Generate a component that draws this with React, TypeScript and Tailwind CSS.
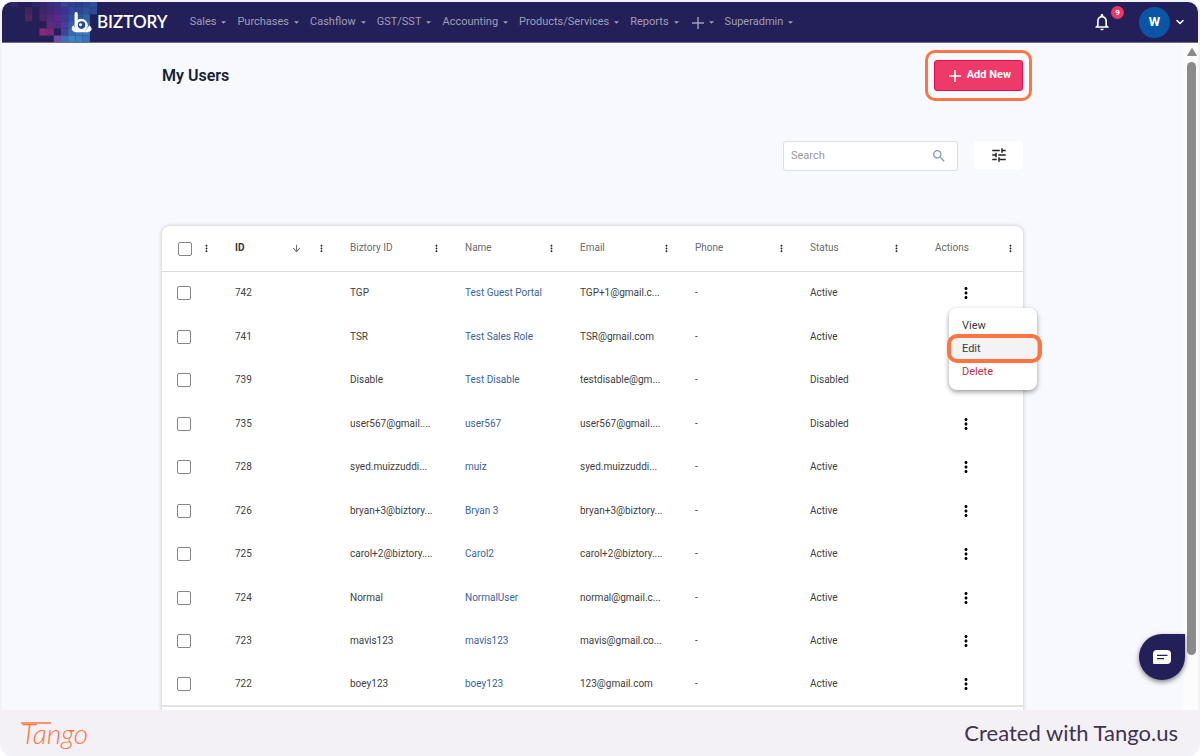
import { ChevronDown } from "lucide-react";
import { MdArrowDownward, MdMoreVert, MdOutlineNotifications, MdSearch, MdTune } from "react-icons/md";

const navItems = ["Sales", "Purchases", "Cashflow", "GST/SST", "Accounting", "Products/Services", "Reports", "+", "Superadmin"];

const columns = ["Biztory ID", "Name", "Email", "Phone", "Status"];

const users = [
  { id: "742", biztoryId: "TGP", name: "Test Guest Portal", email: "TGP+1@gmail.c...", status: "Active" },
  { id: "741", biztoryId: "TSR", name: "Test Sales Role", email: "TSR@gmail.com", status: "Active" },
  { id: "739", biztoryId: "Disable", name: "Test Disable", email: "testdisable@gm...", status: "Disabled" },
  { id: "735", biztoryId: "user567@gmail....", name: "user567", email: "user567@gmail....", status: "Disabled" },
  { id: "728", biztoryId: "syed.muizzuddi...", name: "muiz", email: "syed.muizzuddi...", status: "Active" },
  { id: "726", biztoryId: "bryan+3@biztory...", name: "Bryan 3", email: "bryan+3@biztory...", status: "Active" },
  { id: "725", biztoryId: "carol+2@biztory....", name: "Carol2", email: "carol+2@biztory....", status: "Active" },
  { id: "724", biztoryId: "Normal", name: "NormalUser", email: "normal@gmail.c...", status: "Active" },
  { id: "723", biztoryId: "mavis123", name: "mavis123", email: "mavis@gmail.co...", status: "Active" },
  { id: "722", biztoryId: "boey123", name: "boey123", email: "123@gmail.com", status: "Active" },
];

// Mosaic tiles behind the logo: column, row, colour
const tiles: [number, number, string][] = [
  [1, 0, "#2f2662"], [4, 0, "#30256a"], [5, 0, "#33286f"], [6, 0, "#3a2c7c"], [7, 0, "#34317f"], [8, 0, "#3a3f97"], [9, 0, "#323f90"], [10, 0, "#2d3c8a"], [11, 0, "#2c468f"], [12, 0, "#2f4f9c"],
  [3, 1, "#43235f"], [5, 1, "#43266a"], [6, 1, "#3d2a73"], [7, 1, "#492b86"], [8, 1, "#3a3590"], [9, 1, "#33469c"], [10, 1, "#2d4795"], [11, 1, "#2c529c"], [12, 1, "#2c4a92"],
  [3, 2, "#52255f"], [5, 2, "#4b2665"], [6, 2, "#542a78"], [7, 2, "#56298a"], [8, 2, "#3b3b95"], [9, 2, "#33509f"], [10, 2, "#2e559e"], [11, 2, "#2f64a9"],
  [6, 3, "#5e2a7a"], [7, 3, "#4f2c87"], [8, 3, "#4b3b9a"], [9, 3, "#3a5bad"], [10, 3, "#3165ad"], [11, 3, "#3672b4"],
  [5, 4, "#8b2878"], [6, 4, "#7a297b"], [8, 4, "#473f9d"], [9, 4, "#3c67b5"], [10, 4, "#3878bd"], [11, 4, "#3a7cc0"],
  [7, 5, "#6c4fa6"], [8, 5, "#3d6fb9"], [9, 5, "#3d83c4"], [10, 5, "#3b7dc0"], [11, 5, "#3672b5"],
];

function Mosaic() {
  return (
    <svg className="absolute inset-y-0 left-0 h-full w-24" viewBox="0 0 96 40" preserveAspectRatio="xMinYMin slice" aria-hidden="true">
      {tiles.map(([c, r, color]) => (
        <rect key={`${c}-${r}`} x={c * 7.2 + 1.4} y={r * 7.1 - 2} width="7.3" height="7.2" fill={color} />
      ))}
    </svg>
  );
}

function LogoMark() {
  return (
    <svg className="h-[21px] w-[21px]" viewBox="0 0 20 20" fill="none" aria-hidden="true">
      <path d="M4.9 1.6v10" stroke="#fff" strokeWidth="3" strokeLinecap="round" />
      <circle cx="9.7" cy="12.7" r="6.3" fill="#fff" />
      <path d="M2.4 12.6c-2 1.6-2.4 4-.6 5.5 1 .9 3 .9 4.2.6M17.3 12.8c2.6 1.5 3 4 1.6 5.4-1.2.9-3.600.8-5 .1" fill="#fff" />
      <path d="M3.6 18.3h13" stroke="#fff" strokeWidth="1.8" />
      <circle cx="10" cy="12.5" r="3.6" fill="#2b4a94" />
      <circle cx="9" cy="12.2" r="1.4" fill="#fff" />
    </svg>
  );
}

function Caret() {
  return (
    <svg className="w-[5px]" viewBox="0 0 5 3" aria-hidden="true">
      <path d="M0 .2h5L2.5 2.8z" fill="currentColor" />
    </svg>
  );
}

function NavBar() {
  return (
    <header className="relative flex h-[41px] shrink-0 items-center overflow-hidden rounded-t-[10px] border-b border-[#6e6b8c] bg-[#231f58] pr-3 pl-[69px]">
      <Mosaic />
      <a href="#home" className="relative flex items-center gap-[5px] font-[Lato,sans-serif] text-[17px] leading-5 font-semibold text-white">
        <LogoMark />
        BIZTORY
      </a>
      <nav className="ml-[22px] flex items-center gap-[11px] text-[11px] leading-4 text-[#a09eb9]">
        {navItems.map((item) => (
          <a key={item} href="#menu" className="flex items-center gap-[5px]">
            {item === "+" ? (
              <svg className="mt-[2px] ml-[2px] size-3" viewBox="0 0 12 12" stroke="currentColor" strokeWidth="1.4" role="img" aria-label="Create">
                <path d="M6 0v12M0 6h12" />
              </svg>
            ) : (
              item
            )}
            <Caret />
          </a>
        ))}
      </nav>
      <div className="ml-auto flex items-center">
        <button type="button" aria-label="Notifications" className="relative text-white">
          <MdOutlineNotifications className="size-5" />
          <span className="absolute -top-[6px] left-[19px] flex size-[13px] items-center justify-center rounded-full bg-[#ec3763] text-[8px] leading-3 font-bold text-white">9</span>
        </button>
        <button type="button" aria-label="Account" className="ml-[27px] flex items-center gap-1 text-white">
          <span className="flex size-[31px] items-center justify-center rounded-full bg-[#0a55a5] text-[13px] font-bold">W</span>
          <ChevronDown className="size-3" strokeWidth={3} />
        </button>
      </div>
    </header>
  );
}

function ColumnMenu() {
  return (
    <button type="button" aria-label="Column menu" className="flex w-[10px] justify-center text-[#222]">
      <MdMoreVert className="size-[11px] shrink-0" />
    </button>
  );
}

function Check({ label }: { label: string }) {
  return <input type="checkbox" aria-label={label} className="block size-[14px] appearance-none rounded-[2px] border border-[#858585] bg-white" />;
}

function ActionMenu() {
  return (
    <div className="absolute top-9 left-9 z-10 flex w-[88px] flex-col rounded-lg bg-white pt-[6px] pb-[7px] text-[11px] leading-[23px] text-[#3a3a3a] shadow-[0_2px_5px_rgba(0,0,0,0.4)]">
      <button type="button" className="px-[13px] text-left">View</button>
      <button type="button" className="relative bg-[#f3f3f3] px-[13px] text-left">
        Edit
        <span className="absolute -inset-y-[3px] -right-[5px] -left-[2px] rounded-[10px] border-4 border-[#ff7442]" />
      </button>
      <button type="button" className="px-[13px] text-left text-[#c62f3a]">Delete</button>
    </div>
  );
}

function UserTable() {
  return (
    <div className="mt-[55px] rounded-t-lg bg-white pb-12 shadow-[0_0_4px_rgba(0,0,0,0.22)]">
      <table className="w-full table-fixed border-collapse text-left text-[10px] leading-4 text-[#404040]">
        <colgroup>
          <col className="w-[61px]" />
          <col /><col /><col /><col /><col /><col />
          <col className="w-[110px]" />
        </colgroup>
        <thead>
          <tr className="h-[45px] border-b border-[#dcdcdc] text-[#6b6b6b]">
            <th className="p-0 pt-px pl-4">
              <div className="flex items-center gap-[9px]">
                <Check label="Select all users" />
                <ColumnMenu />
              </div>
            </th>
            <th className="p-0 pl-3 font-bold text-[#333]">
              <div className="flex items-center pr-[12px]">
                ID
                <MdArrowDownward className="mr-[14px] ml-auto size-[11px] text-[#666]" />
                <ColumnMenu />
              </div>
            </th>
            {columns.map((column) => (
              <th key={column} className="p-0 pl-3 font-normal">
                <div className="flex items-center justify-between pr-[12px]">
                  {column}
                  <ColumnMenu />
                </div>
              </th>
            ))}
            <th className="p-0 pl-[22px] font-normal">
              <div className="flex items-center justify-between pr-2">
                Actions
                <ColumnMenu />
              </div>
            </th>
          </tr>
        </thead>
        <tbody className="border-b-2 border-[#e2e2e2]">
          {users.map((user, index) => (
            <tr key={user.id} className="odd:h-11 even:h-[43px]">
              <td className="p-0 pl-[15px]"><Check label={`Select user ${user.id}`} /></td>
              <td className="p-0 pl-3">{user.id}</td>
              <td className="p-0 pl-3">{user.biztoryId}</td>
              <td className="p-0 pl-3"><a href="#user" className="text-[#38639f]">{user.name}</a></td>
              <td className="p-0 pl-3">{user.email}</td>
              <td className="p-0 pl-3">-</td>
              <td className="p-0 pl-3">{user.status}</td>
              <td className="relative p-0 pl-11">
                <button type="button" aria-label={`Actions for user ${user.id}`} className="flex w-[18px] justify-center text-black">
                  <MdMoreVert className="size-[18px] shrink-0" />
                </button>
                {index === 0 && <ActionMenu />}
              </td>
            </tr>
          ))}
        </tbody>
      </table>
    </div>
  );
}

export default function App() {
  return (
    <div className="h-screen bg-white font-[Roboto,sans-serif]">
      <div className="flex h-full flex-col rounded-xl bg-[#f3f1f6] px-[2px] pt-[2px]">
        <NavBar />
        <div className="relative flex min-h-0 flex-1 overflow-hidden bg-[#f8f9fe]">
          <main className="flex-1">
            <div className="mx-auto max-w-[861px]">
              <div className="flex items-center justify-between pt-[17px]">
                <h1 className="text-base leading-6 font-semibold text-[#151f33]">My Users</h1>
                <div className="relative">
                  <button type="button" className="flex h-[31px] items-center gap-[6px] rounded-[3px] border border-[#ea0a50] bg-[#ee3a68] pr-[11px] pl-[14px] text-[11px] font-bold text-white">
                    <svg className="size-3" viewBox="0 0 12 12" stroke="currentColor" strokeWidth="1.6" aria-hidden="true">
                      <path d="M6 0v12M0 6h12" />
                    </svg>
                    Add New
                  </button>
                  <span className="pointer-events-none absolute -inset-x-[9px] -inset-y-[10px] rounded-[10px] border-[3px] border-[#ff7442]" />
                </div>
              </div>
              <div className="mt-[50px] flex items-start justify-end gap-4">
                <label className="flex h-[30px] w-[175px] items-center rounded-[3px] border border-[#dfe1e6] bg-white pr-[10px] pl-[7px]">
                  <input type="search" aria-label="Search" placeholder="Search" className="min-w-0 flex-1 text-[11px] leading-4 outline-none placeholder:text-[#999]" />
                  <MdSearch className="size-4 text-[#8a9cc4]" />
                </label>
                <button type="button" aria-label="Filters" className="flex h-7 w-[49px] items-center justify-center rounded-[3px] bg-white text-[#222]">
                  <MdTune className="size-[18px]" />
                </button>
              </div>
              <UserTable />
            </div>
          </main>
          <div className="flex w-[15px] shrink-0 flex-col items-center bg-[#fcfcfc] pt-[5px] pb-[55px] pl-[2px]" aria-hidden="true">
            <svg className="h-2 w-[10px] shrink-0" viewBox="0 0 10 8"><path d="M5 0.5 9.5 7.5h-9z" fill="#8b8b8b" stroke="#8b8b8b" strokeLinejoin="round" /></svg>
            <div className="mt-[6px] w-[9px] flex-1 rounded-full bg-[#8b8b8b]" />
          </div>
          <button type="button" aria-label="Open chat" className="absolute right-[13px] bottom-[30px] flex size-[46px] items-center justify-center rounded-full rounded-tr-[5px] bg-[#231f58] shadow-[0_2px_5px_rgba(0,0,0,0.5)]">
            <svg className="h-[14px] w-[18px]" viewBox="0 0 18 14" aria-hidden="true">
              <path d="M4 0h10a4 4 0 0 1 4 4v6a4 4 0 0 1-4 4H1a1 1 0 0 1-1-1V4a4 4 0 0 1 4-4z" fill="#fff" />
              <path d="M4 5.3h10.5M4 8.7h7" stroke="#231f58" strokeWidth="1.3" />
            </svg>
          </button>
        </div>
        <footer className="flex h-[46px] shrink-0 items-center justify-between pr-5 pl-[19px]">
          <a href="#tango" className="relative font-[Lato,sans-serif] text-[28px] leading-8 font-light text-[#ff7442] italic">
            Tango
            <svg className="absolute top-[5px] left-0 h-[2px] w-[30px]" viewBox="0 0 30 2" aria-hidden="true"><path d="M0 1h30" stroke="#ff7442" strokeWidth="1.5" /></svg>
          </a>
          <p className="font-[Lato,sans-serif] text-[22px] leading-7 text-[#41334f]">Created with Tango.us</p>
        </footer>
      </div>
    </div>
  );
}
